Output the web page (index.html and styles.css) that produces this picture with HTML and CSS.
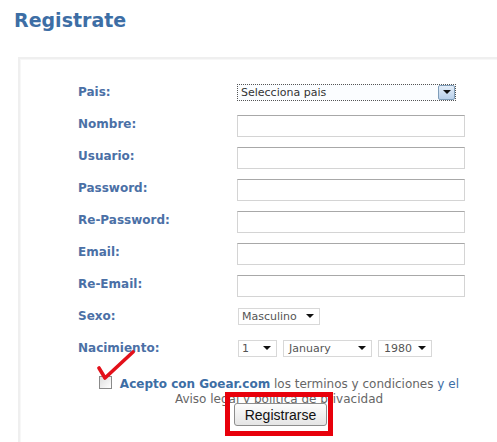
FILE: index.html
```html
<!DOCTYPE html>
<html lang="es">

<head>
    <meta charset="UTF-8">
    <meta name="viewport" content="width=device-width, initial-scale=1.0">
    <title>Registrate</title>
    <link rel="stylesheet" href="styles.css">
</head>

<body>
    <h1 class="page-title">Registrate</h1>

    <div class="card">
        <form class="register-form">
            <div class="fields">
                <label class="field-label">Pais:</label>
                <div class="select select-country">
                    <span class="select-text">Selecciona pais</span>
                    <span class="select-button"><span class="arrow"></span></span>
                </div>

                <label class="field-label">Nombre:</label>
                <input class="text-input" type="text">

                <label class="field-label">Usuario:</label>
                <input class="text-input" type="text">

                <label class="field-label">Password:</label>
                <input class="text-input" type="password">

                <label class="field-label">Re-Password:</label>
                <input class="text-input" type="password">

                <label class="field-label">Email:</label>
                <input class="text-input" type="text">

                <label class="field-label">Re-Email:</label>
                <input class="text-input" type="text">

                <label class="field-label">Sexo:</label>
                <div class="select-row">
                    <div class="select select-sex">
                        <span class="select-text">Masculino</span>
                        <span class="arrow"></span>
                    </div>
                </div>

                <label class="field-label">Nacimiento:</label>
                <div class="select-row">
                    <div class="select select-day">
                        <span class="select-text">1</span>
                        <span class="arrow"></span>
                    </div>
                    <div class="select select-month">
                        <span class="select-text">January</span>
                        <span class="arrow"></span>
                    </div>
                    <div class="select select-year">
                        <span class="select-text">1980</span>
                        <span class="arrow"></span>
                    </div>
                </div>
            </div>

            <div class="terms">
                <span class="checkbox"></span>
                <!-- red check drawn over the checkbox -->
                <svg class="check-mark" width="42" height="34" viewBox="0 0 42 34">
                    <path d="M3 18 L9 28 L37 2" fill="none" stroke="#e3101a" stroke-width="3.6" stroke-linecap="round" stroke-linejoin="round" />
                </svg>
                <strong class="brand">Acepto con Goear.com</strong> los terminos y condiciones <span class="link">y el</span><br>
                Aviso legal y politica de privacidad
            </div>

            <div class="submit-row">
                <div class="highlight">
                    <button type="button" class="submit-button">Registrarse</button>
                </div>
            </div>
        </form>
    </div>
</body>

</html>
```

FILE: styles.css
```css
body {
    margin: 0;
    font-family: "DejaVu Sans", Verdana, sans-serif;
    background: #fff;
    overflow: hidden;
}

.page-title {
    margin: 0;
    padding: 9px 0 0 14px;
    height: 48px;
    font-size: 19px;
    font-weight: bold;
    color: #3d6ea5;
}

.card {
    margin-left: 18px;
    height: 400px;
    border-top: 2px solid #efefef;
    border-left: 2px solid #efefef;
    box-shadow: inset 1px 1px 0 #f7f7f7;
    box-sizing: border-box;
}

.register-form {
    padding: 17px 0 0 58px;
    width: 402px;
}

.fields {
    display: grid;
    grid-template-columns: 159px 228px;
    grid-auto-rows: 32px;
    align-items: center;
}

.field-label {
    font-size: 12px;
    font-weight: bold;
    color: #4b70a6;
}

.text-input {
    width: 228px;
    height: 22px;
    margin-top: 3px;
    border: 1px solid #d4d4d4;
    border-top-color: #a8a8a8;
    box-sizing: border-box;
    background: #fff;
}

.select {
    display: flex;
    align-items: center;
    height: 17px;
    border: 1px solid #d8d8d8;
    box-sizing: border-box;
    background: #fff;
    font-size: 11px;
    color: #555;
}

.select-text {
    flex: 1;
    padding-left: 3px;
}

.select-country {
    width: 219px;
    border: 1px dotted #555;
    background: #fbfdff;
    color: #333;
}

.select-button {
    display: flex;
    align-items: center;
    justify-content: center;
    width: 17px;
    height: 15px;
    border: 1px solid #7f9db9;
    border-radius: 2px;
    background: linear-gradient(#e4eef9, #b9d0ea);
    box-sizing: border-box;
}

.arrow {
    width: 0;
    height: 0;
    margin-right: 5px;
    border-left: 4px solid transparent;
    border-right: 4px solid transparent;
    border-top: 4px solid #111;
}

.select-button .arrow {
    margin-right: 0;
}

.select-row {
    display: flex;
    gap: 6px;
    margin-left: 1px;
}

.select-sex {
    width: 82px;
}

.select-day {
    width: 39px;
}

.select-month {
    width: 89px;
}

.select-year {
    width: 54px;
}

.select-year .select-text,
.select-month .select-text {
    padding-left: 5px;
}

.terms {
    position: relative;
    margin-top: 12px;
    text-align: center;
    font-size: 12px;
    line-height: 15px;
    color: #666;
}

.checkbox {
    display: inline-block;
    width: 11px;
    height: 11px;
    margin-right: 4px;
    vertical-align: -1px;
    border: 1px solid #8a8a8a;
    background: linear-gradient(135deg, #ddd, #fff);
}

.check-mark {
    position: absolute;
    left: 18px;
    top: -26px;
}

.brand {
    color: #3d6ea5;
}

.link {
    color: #3d6ea5;
}

.submit-row {
    display: flex;
    justify-content: center;
    margin-top: -15px;
}

.highlight {
    position: relative;
    padding: 6px 1px 5px 4px;
    border: 5px solid #e8000b;
}

.submit-button {
    display: block;
    width: 93px;
    height: 23px;
    padding: 0;
    border: 1px solid #8d8d8d;
    border-radius: 3px;
    background: linear-gradient(#fdfdfd, #e5e5e5);
    font-family: "Liberation Sans", Arial, sans-serif;
    font-size: 14px;
    color: #111;
}
```
